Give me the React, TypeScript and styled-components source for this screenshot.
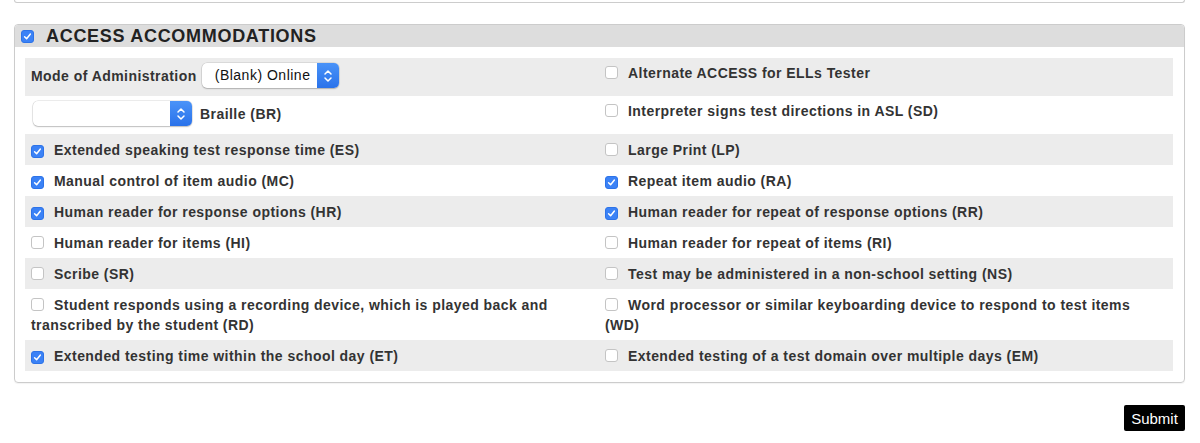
import React from 'react';
import styled, { createGlobalStyle } from 'styled-components';

type Item = { label: string; checked?: boolean };

const rows: [Item, Item][] = [
  [{ label: 'Extended speaking test response time (ES)', checked: true }, { label: 'Large Print (LP)' }],
  [{ label: 'Manual control of item audio (MC)', checked: true }, { label: 'Repeat item audio (RA)', checked: true }],
  [
    { label: 'Human reader for response options (HR)', checked: true },
    { label: 'Human reader for repeat of response options (RR)', checked: true },
  ],
  [{ label: 'Human reader for items (HI)' }, { label: 'Human reader for repeat of items (RI)' }],
  [{ label: 'Scribe (SR)' }, { label: 'Test may be administered in a non-school setting (NS)' }],
  [
    { label: 'Student responds using a recording device, which is played back and transcribed by the student (RD)' },
    { label: 'Word processor or similar keyboarding device to respond to test items (WD)' },
  ],
  [
    { label: 'Extended testing time within the school day (ET)', checked: true },
    { label: 'Extended testing of a test domain over multiple days (EM)' },
  ],
];

const Check = ({ checked }: { checked?: boolean }) => (
  <CheckBox $checked={checked}>
    {checked && (
      <svg width="9" height="9" viewBox="0 0 9 9">
        <path d="M1.6 4.8 L3.6 6.8 L7.4 2" fill="none" stroke="#fff" strokeWidth="1.5" strokeLinecap="round" strokeLinejoin="round" />
      </svg>
    )}
  </CheckBox>
);

const Select = ({ value, width }: { value: string; width: number }) => (
  <SelectBox style={{ width }}>
    <SelectText>{value}</SelectText>
    <Stepper>
      <svg width="10" height="14" viewBox="0 0 10 14">
        <path d="M2 5 L5 2 L8 5 M2 9 L5 12 L8 9" fill="none" stroke="#fff" strokeWidth="1.5" strokeLinecap="round" strokeLinejoin="round" />
      </svg>
    </Stepper>
  </SelectBox>
);

const App = () => {
  return (
    <Page>
      <GlobalStyle />
      <PrevPanel />
      <Panel>
        <PanelHeader>
          <Check checked />
          <Title>ACCESS ACCOMMODATIONS</Title>
        </PanelHeader>
        <PanelBody>
          <Row $striped $tall>
            <FieldCell>
              <FieldLabel>Mode of Administration</FieldLabel>
              <Select value="(Blank) Online" width={137} />
            </FieldCell>
            <Cell $tall>
              <Check />
              Alternate ACCESS for ELLs Tester
            </Cell>
          </Row>
          <Row $tall>
            <FieldCell>
              <Indent>
                <Select value="" width={159} />
              </Indent>
              <FieldLabel>Braille (BR)</FieldLabel>
            </FieldCell>
            <Cell $tall>
              <Check />
              Interpreter signs test directions in ASL (SD)
            </Cell>
          </Row>
          {rows.map(([left, right], index) => (
            <Row key={index} $striped={index % 2 === 0}>
              <Cell>
                <Check checked={left.checked} />
                {left.label}
              </Cell>
              <Cell>
                <Check checked={right.checked} />
                {right.label}
              </Cell>
            </Row>
          ))}
        </PanelBody>
      </Panel>
      <Actions>
        <SubmitButton type="button">Submit</SubmitButton>
      </Actions>
    </Page>
  );
};

const GlobalStyle = createGlobalStyle`
  body {
    margin: 0;
    background: #fff;
    font-family: "Liberation Sans", Arial, sans-serif;
    color: #333;
  }
`;

const Page = styled.div`
  width: 1171px;
  padding: 0 0 0 14px;
`;

const PrevPanel = styled.div`
  height: 2px;
  border: 1px solid #ccc;
  border-top: none;
  border-radius: 0 0 4px 4px;
  margin-bottom: 21px;
`;

const Panel = styled.div`
  border: 1px solid #ccc;
  border-radius: 4px;
  overflow: hidden;
  box-shadow: 0 1px 1px rgba(0, 0, 0, 0.05);
`;

const PanelHeader = styled.div`
  display: flex;
  align-items: center;
  height: 22px;
  padding-left: 6px;
  background: #ddd;
`;

const Title = styled.span`
  margin-left: 2px;
  font-size: 18px;
  font-weight: bold;
  letter-spacing: 0.7px;
  color: #222;
  line-height: 22px;
`;

const PanelBody = styled.div`
  padding: 11px 11px 11px 10px;
`;

const Row = styled.div<{ $striped?: boolean; $tall?: boolean }>`
  display: grid;
  grid-template-columns: 1fr 1fr;
  background: ${(p) => (p.$striped ? '#ececec' : '#fff')};
  min-height: ${(p) => (p.$tall ? '38px' : '31px')};
`;

const Cell = styled.div<{ $tall?: boolean }>`
  padding: ${(p) => (p.$tall ? '5px 6px' : '6px 6px 5px 6px')};
  font-size: 14px;
  font-weight: bold;
  letter-spacing: 0.45px;
  line-height: 20px;
  color: #333;
`;

const FieldCell = styled.div`
  display: flex;
  align-items: center;
  padding: 5px 6px 8px 6px;
  font-size: 14px;
  font-weight: bold;
  letter-spacing: 0.45px;
  line-height: 20px;
  color: #333;
`;

const CheckBox = styled.span<{ $checked?: boolean }>`
  display: inline-flex;
  align-items: center;
  justify-content: center;
  box-sizing: border-box;
  width: 13px;
  height: 13px;
  margin-right: 10px;
  vertical-align: -1px;
  border-radius: 3px;
  border: 1px solid ${(p) => (p.$checked ? '#2d73e8' : '#c4c4c4')};
  background: ${(p) => (p.$checked ? '#3b82f6' : '#fff')};
`;

const FieldLabel = styled.span`
  margin-right: 5px;
`;

const Indent = styled.span`
  display: inline-flex;
  margin-left: 2px;
  margin-right: 8px;
`;

const SelectBox = styled.span`
  display: inline-flex;
  box-sizing: border-box;
  height: 25px;
  border-radius: 5px;
  background: #fff;
  box-shadow: 0 0 0 0.5px rgba(0, 0, 0, 0.15), 0 1px 1.5px rgba(0, 0, 0, 0.2);
  overflow: hidden;
`;

const SelectText = styled.span`
  flex: 1;
  padding-left: 13px;
  font-size: 14px;
  font-weight: normal;
  letter-spacing: 0.5px;
  line-height: 25px;
  color: #111;
  white-space: nowrap;
`;

const Stepper = styled.span`
  display: flex;
  align-items: center;
  justify-content: center;
  width: 22px;
  background: linear-gradient(#4a93f8, #2a72ea);
`;

const Actions = styled.div`
  display: flex;
  justify-content: flex-end;
  margin-top: 22px;
`;

const SubmitButton = styled.button`
  width: 61px;
  height: 26px;
  padding: 0;
  border: none;
  border-radius: 2px;
  background: #000;
  color: #fff;
  font-family: "Liberation Sans", Arial, sans-serif;
  font-size: 15px;
`;

export default App;
